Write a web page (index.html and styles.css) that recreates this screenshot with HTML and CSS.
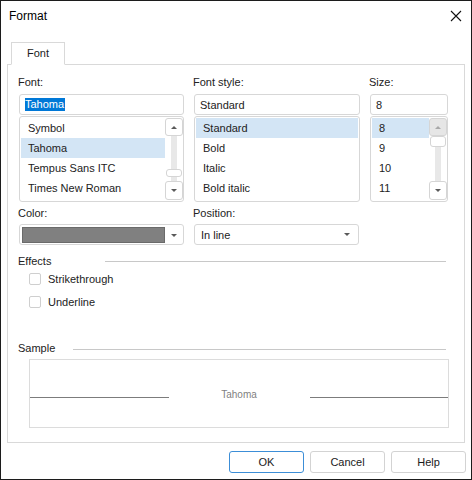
FILE: index.html
```html
<!DOCTYPE html>
<html>
<head>
<meta charset="utf-8">
<link rel="stylesheet" href="styles.css">
</head>
<body>
<div class="window">
  <div class="titlebar">
    <span class="title">Format</span>
    <svg class="close" width="12" height="12" viewBox="0 0 12 12"><path d="M1 1 L11 11 M11 1 L1 11" stroke="#111" stroke-width="1.1" fill="none"/></svg>
  </div>
  <div class="tabstrip"><div class="tab">Font</div></div>
  <div class="panel">
    <div class="cols">
      <div class="col c1">
        <div class="label">Font:</div>
        <div class="input"><span class="sel">Tahoma</span></div>
        <div class="list">
          <div class="items">
            <div class="row">Symbol</div>
            <div class="row hl">Tahoma</div>
            <div class="row">Tempus Sans ITC</div>
            <div class="row">Times New Roman</div>
          </div>
          <div class="sbar">
            <div class="sbtn"><i class="tri-up"></i></div>
            <div class="track end"><div class="thumb small"></div></div>
            <div class="sbtn"><i class="tri-down"></i></div>
          </div>
        </div>
        <div class="label gap">Color:</div>
        <div class="combo color">
          <div class="swatch"></div>
          <div class="arrow a18"><i class="tri-down"></i></div>
        </div>
      </div>
      <div class="col c2">
        <div class="label">Font style:</div>
        <div class="input">Standard</div>
        <div class="list">
          <div class="items">
            <div class="row hl">Standard</div>
            <div class="row">Bold</div>
            <div class="row">Italic</div>
            <div class="row">Bold italic</div>
          </div>
        </div>
        <div class="label gap">Position:</div>
        <div class="combo pos">
          <div class="ctext">In line</div>
          <div class="arrow a22"><i class="tri-down"></i></div>
        </div>
      </div>
      <div class="col c3">
        <div class="label">Size:</div>
        <div class="input">8</div>
        <div class="list">
          <div class="items">
            <div class="row hl">8</div>
            <div class="row">9</div>
            <div class="row">10</div>
            <div class="row">11</div>
          </div>
          <div class="sbar">
            <div class="sbtn disabled"><i class="tri-up light"></i></div>
            <div class="track"><div class="thumb big"></div></div>
            <div class="sbtn"><i class="tri-down"></i></div>
          </div>
        </div>
      </div>
    </div>

    <div class="group effects">
      <span class="glabel">Effects</span><span class="gline"></span>
    </div>
    <div class="check first"><span class="box"></span><span>Strikethrough</span></div>
    <div class="check"><span class="box"></span><span>Underline</span></div>

    <div class="group sample">
      <span class="glabel">Sample</span><span class="gline"></span>
    </div>
    <div class="samplebox">
      <span class="sline"></span>
      <span class="stext">Tahoma</span>
      <span class="sline"></span>
    </div>
  </div>
  <div class="buttons">
    <div class="btn ok">OK</div>
    <div class="btn">Cancel</div>
    <div class="btn">Help</div>
  </div>
</div>
</body>
</html>
```

FILE: styles.css
```css
* { box-sizing: border-box; }
html, body { margin: 0; padding: 0; background: #fff; }
body { font-family: "Liberation Sans", Arial, sans-serif; font-size: 11px; color: #222; }

.window {
  width: 472px; height: 480px;
  border: 1px solid #1c1c1c;
  background: #fff;
}

.titlebar {
  height: 30px;
  display: flex; align-items: center; justify-content: space-between;
  padding: 0 9px 0 8px;
}
.title { font-size: 12px; color: #000; }
.close { display: block; margin-top: -1px; }

.tabstrip {
  display: flex;
  margin: 11px 6px 0;
  padding-left: 4px;
  border-bottom: 1px solid #d9d9d9;
}
.tab {
  width: 54px; height: 23px;
  border: 1px solid #d9d9d9; border-bottom-color: #fff;
  margin-bottom: -1px;
  background: #fff;
  display: flex; align-items: center; justify-content: center;
  padding-bottom: 1px;
  color: #1a1a1a;
}

.panel {
  margin: 0 6px;
  height: 378px;
  border: 1px solid #d9d9d9; border-top: none;
  padding: 11px 15px 0 11px;
}

.cols { display: flex; gap: 10px; }
.c1 { width: 165px; }
.c2 { width: 166px; }
.c3 { width: 78px; }

.label { height: 13px; line-height: 13px; margin-left: -1px; margin-bottom: 5px; }
.label.gap { margin-top: 5px; margin-bottom: 4px; }

.input {
  height: 21px;
  border: 1px solid #d7d7d7; border-radius: 3px;
  padding-left: 5px;
  display: flex; align-items: center;
}
.sel { background: #0078d7; color: #fff; line-height: 13px; padding-right: 1px; }

.list {
  margin-top: 1px;
  height: 86px;
  border: 1px solid #d7d7d7; border-radius: 3px;
  padding: 1px 0 0 1px;
  display: flex;
}
.items { flex: 1; }
.row { height: 20px; line-height: 20px; padding-left: 7px; white-space: nowrap; }
.row.hl { background: #d3e5f5; }
.c2 .list { padding-right: 1px; }

.sbar { width: 18px; display: flex; flex-direction: column; padding-bottom: 1px; }
.sbtn {
  height: 18px;
  border: 1px solid #d5d5d5; border-radius: 3px;
  background: #fff;
  display: flex; align-items: center; justify-content: center;
}
.sbtn:last-child { height: 19px; }
.sbtn.disabled { background: #e6e6e6; }
.track {
  flex: 1;
  display: flex; flex-direction: column;
  background: linear-gradient(90deg, transparent 6px, #e8e8e8 6px, #e8e8e8 12px, transparent 12px);
}
.track.end { justify-content: flex-end; padding-bottom: 4px; }
.thumb { border: 1px solid #d5d5d5; border-radius: 3px; background: #fff; margin: 0 1px; }
.thumb.small { height: 8px; }
.thumb.big { height: 11px; }

.tri-up, .tri-down { display: block; width: 0; height: 0; border-left: 3px solid transparent; border-right: 3px solid transparent; }
.tri-up { border-bottom: 3px solid #5a5a5a; }
.tri-down { border-top: 3px solid #5a5a5a; }
.tri-up.light { border-bottom-color: #a8a8a8; }

.combo {
  height: 21px;
  border: 1px solid #d7d7d7; border-radius: 3px;
  display: flex; align-items: center;
}
.combo.color { padding: 1px 0 0 2px; }
.swatch { flex: 1; height: 16px; background: #808080; border: 1px solid #6a6a6a; }
.combo.pos { width: 165px; padding-left: 6px; }
.ctext { flex: 1; }
.arrow { display: flex; justify-content: center; align-items: center; }
.a18 { width: 18px; }
.a22 { width: 22px; }

.group { display: flex; align-items: center; height: 13px; line-height: 13px; margin-left: -1px; }
.effects { margin-top: 10px; }
.gline { flex: 1; height: 1px; background: #c8c8c8; margin-right: 3px; }
.effects .gline { margin-left: 54px; }
.sample { margin-top: 29px; }
.sample .gline { margin-left: 18px; margin-top: 1px; }

.check { height: 23px; display: flex; align-items: center; padding-left: 10px; }
.check.first { margin-top: -1px; }
.box { width: 12px; height: 12px; border: 1px solid #cfcfcf; border-radius: 2px; margin-right: 7px; margin-top: 1px; }

.samplebox {
  margin: 4px 0 0 10px;
  width: 420px; height: 69px;
  border: 1px solid #dcdcdc;
  display: flex; align-items: center;
}
.sline { flex: 1; height: 1px; background: #7c7c7c; margin-top: 8px; }
.stext { width: 141px; text-align: center; font-size: 10px; color: #7f7f7f; margin-top: 2px; }

.buttons { display: flex; justify-content: flex-end; gap: 6px; margin: 8px 5px 0 0; }
.btn {
  width: 75px; height: 22px;
  border: 1px solid #d3d3d3; border-radius: 3px;
  display: flex; align-items: center; justify-content: center;
  color: #1a1a1a;
}
.btn.ok { border-color: #3c8ed7; }
```
